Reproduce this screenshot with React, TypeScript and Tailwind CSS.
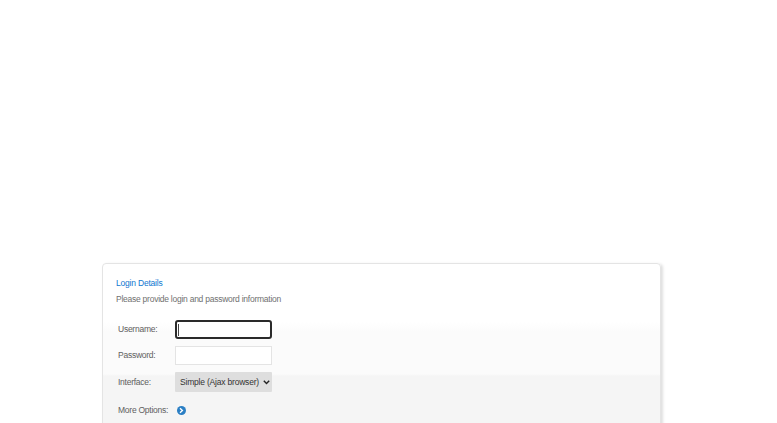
import React from 'react';

const App: React.FC = () => {
  return (
    <div className="h-[423px] w-[777px] overflow-hidden bg-white pl-[102px] pt-[263px] font-['Liberation_Sans',sans-serif] text-[8.5px] tracking-[-0.25px]">
      <div className="h-[200px] w-[559px] rounded-t-[4px] border border-[#e4e4e4] bg-[linear-gradient(#ffffff_0px,#ffffff_58px,#fbfbfb_68px,#fbfbfb_110px,#f5f5f5_112px,#f5f5f5_200px)] pl-[13px] pt-[13px] shadow-[2px_1px_3px_rgba(0,0,0,0.13)]">
        <h1 className="leading-[12px] font-normal tracking-[-0.2px] text-[#0f78d0]">Login Details</h1>
        <p className="mt-[4px] leading-[12px] text-[#707070]">Please provide login and password information</p>

        <div className="mt-[15px] flex flex-col gap-[7px] text-[#606060]">
          <div className="flex h-[19px] items-center">
            <label className="w-[59px] pl-[2px]">Username:</label>
            <div className="flex h-[19px] w-[97px] items-center rounded-[3px] border-2 border-[#2a2a2a] bg-white pl-[1px]">
              <span className="h-[12px] w-px bg-[#444444]" />
            </div>
          </div>
          <div className="flex h-[19px] items-center">
            <label className="w-[59px] pl-[2px]">Password:</label>
            <input type="password" aria-label="Password" className="h-[19px] w-[97px] border border-[#e4e4e4] bg-white outline-none" />
          </div>
          <div className="flex h-[20px] items-center">
            <label className="w-[59px] pl-[2px] pt-[1px]">Interface:</label>
            <div className="relative h-[20px] w-[97px]">
              <select aria-label="Interface" defaultValue="simple" className="h-[20px] w-[97px] appearance-none rounded-[1px] bg-[#dedede] pl-[5px] text-[8.5px] tracking-[-0.2px] text-[#333333] outline-none">
                <option value="simple">Simple (Ajax browser)</option>
              </select>
              <svg width="7" height="5" viewBox="0 0 7 5" className="pointer-events-none absolute right-[2px] top-[8px]">
                <path d="M0.8 0.8 3.5 3.5 6.2 0.8" fill="none" stroke="#222222" strokeWidth="1.4" />
              </svg>
            </div>
          </div>
          <div className="mt-[1px] flex h-[20px] items-center">
            <span className="w-[59px] whitespace-nowrap pl-[2px]">More Options:</span>
            <svg width="9" height="9" viewBox="0 0 9 9" className="ml-[2px]">
              <circle cx="4.5" cy="4.5" r="4.5" fill="#2b7fc4" />
              <path d="M3 2.2 5.4 4.5 3 6.8" fill="none" stroke="#ffffff" strokeWidth="1.4" />
            </svg>
          </div>
        </div>
      </div>
    </div>
  );
};

export default App;
